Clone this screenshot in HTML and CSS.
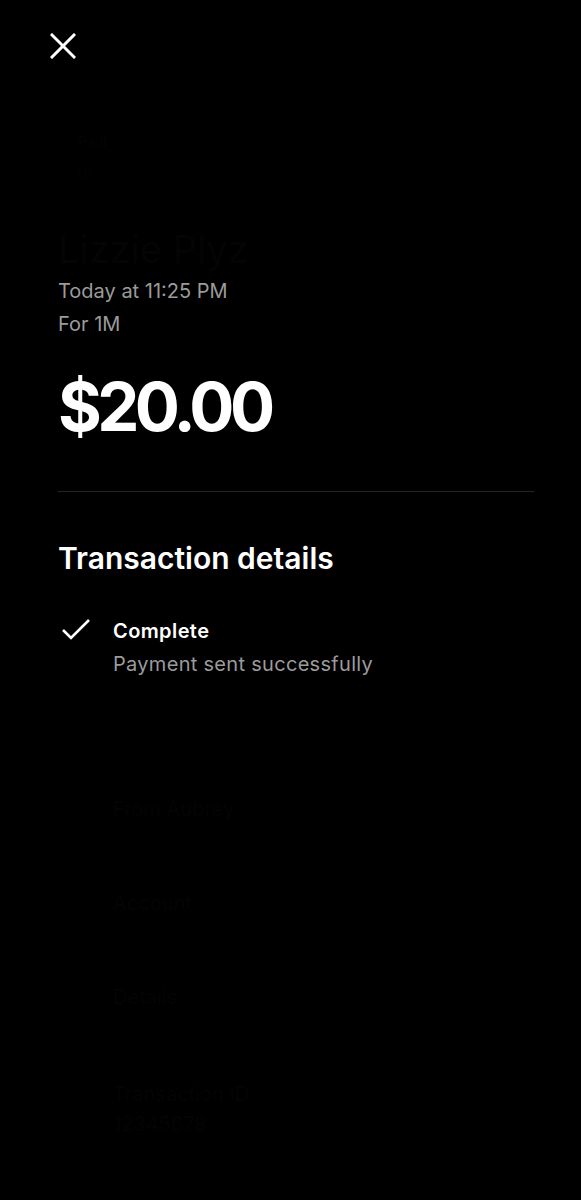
FILE: index.html
```html
<!DOCTYPE html>
<html lang="en">
<head>
  <meta charset="UTF-8">
  <title>Payment receipt</title>
  <link rel="stylesheet" href="styles.css">
</head>
<body>

  <div class="screen">
    <div class="topbar">
      <svg class="close" width="26" height="26" viewBox="0 0 26 26">
        <path d="M2 2 L24 24 M24 2 L2 24" stroke="#fff" stroke-width="3" stroke-linecap="square"/>
      </svg>
    </div>

    <div class="faint-lines">
      <span class="faint small">Paid</span>
      <span class="faint small">to</span>
    </div>

    <div class="faint big-name">Lizzie Plyz</div>

    <p class="meta">Today at 11:25 PM</p>
    <p class="meta">For 1M</p>

    <div class="amount">$20.00</div>

    <hr class="divider">

    <h2 class="section-title">Transaction details</h2>

    <div class="step">
      <svg class="check" width="30" height="24" viewBox="0 0 30 24">
        <path d="M2 12 L10 20 L28 2" fill="none" stroke="#fff" stroke-width="2.6"/>
      </svg>
      <div class="step-text">
        <div class="step-title">Complete</div>
        <div class="step-sub">Payment sent successfully</div>
      </div>
    </div>

    <div class="hidden-block">
      <div class="faint-row">From Aubrey</div>
      <div class="faint-row small-gap">Account</div>
      <div class="faint-row small-gap">Details</div>
      <div class="faint-row bottom">Transaction ID<br>12345678</div>
    </div>
  </div>

</body>
</html>
```

FILE: styles.css
```css
body {
  margin: 0;
  padding: 0;
  background: #000;
  font-family: Inter, 'Noto Sans', sans-serif;
  color: #fff;
}

.screen {
  padding: 0 47px 0 58px;
  min-height: 1200px;
}

.topbar {
  padding-top: 33px;
  margin-left: -8px;
  height: 40px;
}

.close {
  display: block;
}

.faint {
  color: #040404;
}

.faint-lines {
  display: flex;
  flex-direction: column;
  gap: 14px;
  margin-top: 60px;
  padding-left: 20px;
}

.small {
  font-size: 14px;
}

.big-name {
  font-size: 38px;
  margin-top: 46px;
  line-height: 44px;
  margin-bottom: 4px;
}

.meta {
  margin: 0;
  font-size: 20px;
  line-height: 33px;
  color: #9b9b9b;
  letter-spacing: 0;
}

.amount {
  margin-top: 26px;
  font-size: 67px;
  font-weight: 700;
  letter-spacing: -4.6px;
  line-height: 80px;
}

.divider {
  border: none;
  border-top: 1px solid #262626;
  margin: 44px 0 0;
}

.section-title {
  margin: 46px 0 0;
  font-size: 30px;
  font-weight: 600;
  letter-spacing: 0;
  line-height: 40px;
}

.step {
  display: flex;
  gap: 22px;
  margin-top: 40px;
}

.check {
  margin-top: 0;
  margin-left: 3px;
  flex-shrink: 0;
}

.step-title {
  font-size: 20px;
  font-weight: 600;
  line-height: 26px;
  letter-spacing: 0.4px;
}

.step-sub {
  margin-top: 7px;
  font-size: 20px;
  line-height: 26px;
  color: #9b9b9b;
  letter-spacing: 0.3px;
}

.hidden-block {
  padding-left: 55px;
  color: #040404;
  font-size: 20px;
}

.faint-row {
  margin-top: 120px;
}

.small-gap {
  margin-top: 70px;
}

.bottom {
  margin-top: 70px;
  line-height: 30px;
}
```
